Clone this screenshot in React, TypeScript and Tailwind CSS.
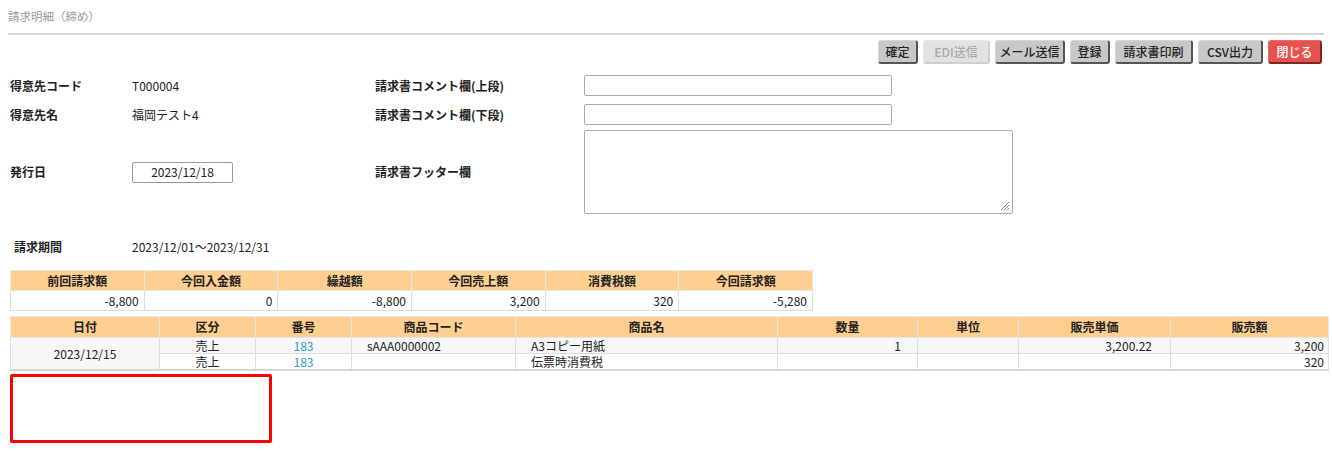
import React from "react";

const font = { fontFamily: '"Noto Sans CJK JP", "Open Sans", sans-serif' };

const buttons = [
  { label: "確定", w: "w-[40px]", kind: "normal" },
  { label: "EDI送信", w: "w-[67px]", kind: "disabled" },
  { label: "メール送信", w: "w-[70px]", kind: "normal" },
  { label: "登録", w: "w-[40px]", kind: "normal" },
  { label: "請求書印刷", w: "w-[78px]", kind: "normal" },
  { label: "CSV出力", w: "w-[65px]", kind: "normal" },
  { label: "閉じる", w: "w-[54px]", kind: "danger" },
];

const btnStyle: Record<string, string> = {
  normal: "bg-[#c8c8c8] text-[#222] border-r-[#555] border-b-[#555] border-t-[#d6d6d6] border-l-[#d6d6d6]",
  disabled: "bg-[#e2e2e2] text-[#a9a9a9] border-r-[#cfcfcf] border-b-[#cfcfcf] border-t-[#e8e8e8] border-l-[#e8e8e8]",
  danger: "bg-[#e8524e] text-white border-r-[#7a2826] border-b-[#7a2826] border-t-[#ec6a66] border-l-[#ec6a66]",
};

const summary = [
  { h: "前回請求額", v: "-8,800" },
  { h: "今回入金額", v: "0" },
  { h: "繰越額", v: "-8,800" },
  { h: "今回売上額", v: "3,200" },
  { h: "消費税額", v: "320" },
  { h: "今回請求額", v: "-5,280" },
];

const detailHeads = [
  { h: "日付", w: "w-[149px]" },
  { h: "区分", w: "w-[96px]" },
  { h: "番号", w: "w-[96px]" },
  { h: "商品コード", w: "w-[164px]" },
  { h: "商品名", w: "w-[262px]" },
  { h: "数量", w: "w-[140px]" },
  { h: "単位", w: "w-[101px]" },
  { h: "販売単価", w: "w-[152px]" },
  { h: "販売額", w: "w-[158px]" },
];

const td = "border border-[#dcdcdc] h-[16px] leading-[15px] p-0";

export default function App() {
  return (
    <div className="w-[1332px] h-[451px] bg-white text-[12px] text-[#222] overflow-hidden" style={font}>
      {/* title */}
      <div className="mx-[8px] pt-[8px] pb-[8px] border-b-2 border-[#d4d4d4] text-[11.5px] text-[#9a9a9a] leading-[17px]">
        請求明細（締め）
      </div>

      {/* buttons */}
      <div className="flex justify-end gap-[5px] pr-[10px] mt-[5px]">
        {buttons.map((b) => (
          <div
            key={b.label}
            className={`${b.w} ${btnStyle[b.kind]} h-[24px] flex items-center justify-center rounded-[3px] border-r-2 border-b-2 border-t border-l text-[12px] font-medium`}
          >
            {b.label}
          </div>
        ))}
      </div>

      {/* form */}
      <div className="mt-[11px] pl-[10px] flex flex-col">
        <div className="flex items-center h-[21px]">
          <div className="w-[122px] font-bold">得意先コード</div>
          <div className="w-[243px]">T000004</div>
          <div className="w-[209px] font-bold">請求書コメント欄(上段)</div>
          <div className="w-[308px] h-[21px] border border-[#aaa] rounded-[2px]" />
        </div>
        <div className="flex items-center h-[21px] mt-[8px]">
          <div className="w-[122px] font-bold">得意先名</div>
          <div className="w-[243px]">福岡テスト4</div>
          <div className="w-[209px] font-bold">請求書コメント欄(下段)</div>
          <div className="w-[308px] h-[21px] border border-[#aaa] rounded-[2px]" />
        </div>
        <div className="flex items-center h-[84px] mt-[5px]">
          <div className="w-[122px] font-bold">発行日</div>
          <div className="w-[243px]">
            <div className="w-[101px] h-[21px] border border-[#999] rounded-[2px] flex items-center justify-center">
              2023/12/18
            </div>
          </div>
          <div className="w-[209px] font-bold">請求書フッター欄</div>
          <div className="relative w-[429px] h-[84px] border border-[#aaa] rounded-[2px]">
            <svg className="absolute right-[2px] bottom-[2px]" width="12" height="12" viewBox="0 0 12 12">
              <path d="M11 3 L3 11 M11 6 L6 11 M11 9 L9 11" stroke="#888" strokeWidth="1" />
            </svg>
          </div>
        </div>
        <div className="flex items-center h-[20px] mt-[23px]">
          <div className="w-[122px] pl-[4px] font-bold">請求期間</div>
          <div>2023/12/01～2023/12/31</div>
        </div>
      </div>

      {/* summary table */}
      <table className="ml-[10px] mt-[13px] border-collapse w-[803px] table-fixed">
        <thead>
          <tr>
            {summary.map((s) => (
              <th key={s.h} className="bg-[#fecf90] border border-[#e6e6e6] h-[20px] p-0 font-bold text-center">
                {s.h}
              </th>
            ))}
          </tr>
        </thead>
        <tbody>
          <tr>
            {summary.map((s) => (
              <td key={s.h} className="border border-[#dcdcdc] h-[20px] p-0 pr-[5px] text-right">
                {s.v}
              </td>
            ))}
          </tr>
        </tbody>
      </table>

      {/* detail table */}
      <table className="ml-[10px] mt-[5px] border-collapse w-[1318px] table-fixed border-b-2 border-b-[#d6d6d6]">
        <thead>
          <tr>
            {detailHeads.map((d) => (
              <th key={d.h} className={`${d.w} bg-[#fecf90] border border-[#e6e6e6] h-[21px] p-0 font-bold text-center`}>
                {d.h}
              </th>
            ))}
          </tr>
        </thead>
        <tbody>
          <tr className="bg-[#f7f7f7]">
            <td rowSpan={2} className={`${td} text-center bg-[#f7f7f7]`}>
              2023/12/15
            </td>
            <td className={`${td} text-center`}>売上</td>
            <td className={`${td} text-center text-[#2a9bd2]`}>183</td>
            <td className={`${td} pl-[15px]`}>sAAA0000002</td>
            <td className={`${td} pl-[15px]`}>A3コピー用紙</td>
            <td className={`${td} text-right pr-[16px]`}>1</td>
            <td className={td}></td>
            <td className={`${td} text-right pr-[18px]`}>3,200.22</td>
            <td className={`${td} text-right pr-[4px]`}>3,200</td>
          </tr>
          <tr className="bg-white">
            <td className={`${td} text-center`}>売上</td>
            <td className={`${td} text-center text-[#2a9bd2]`}>183</td>
            <td className={td}></td>
            <td className={`${td} pl-[15px]`}>伝票時消費税</td>
            <td className={td}></td>
            <td className={td}></td>
            <td className={td}></td>
            <td className={`${td} text-right pr-[4px]`}>320</td>
          </tr>
        </tbody>
      </table>

      {/* highlighted empty area */}
      <div className="ml-[10px] mt-[3px] w-[262px] h-[69px] border-[3px] border-[#ff0000] rounded-[2px]" />
    </div>
  );
}
